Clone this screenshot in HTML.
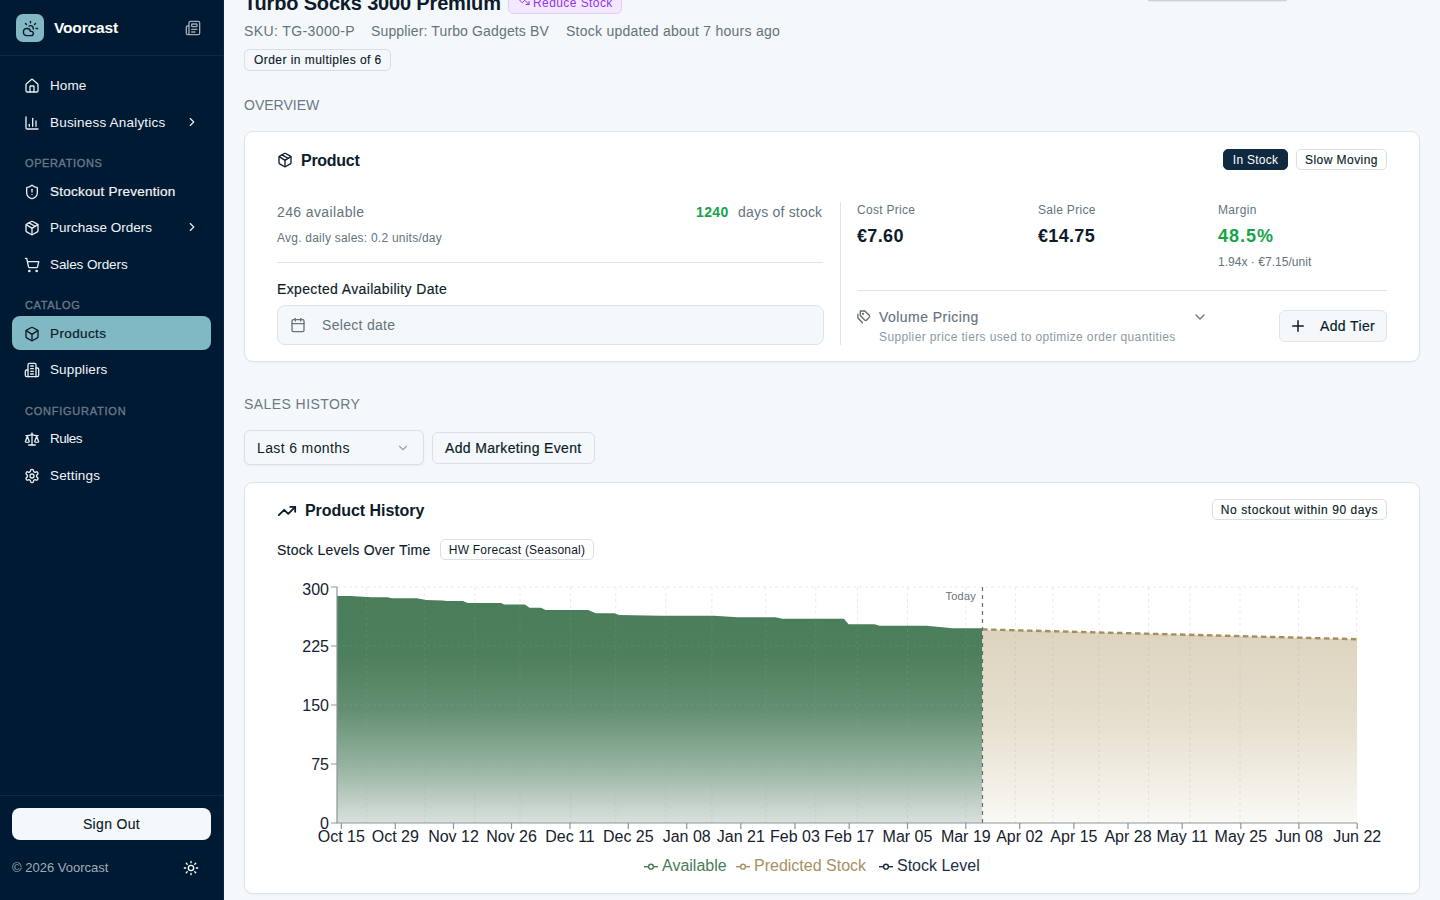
<!DOCTYPE html>
<html><head><meta charset="utf-8">
<style>
*{box-sizing:border-box;margin:0;padding:0}
html,body{width:1440px;height:900px;overflow:hidden}
body{background:#f4f8fb;font-family:"Liberation Sans",sans-serif;color:#0d1b2a;position:relative}
.abs{position:absolute}
.t{position:absolute;white-space:nowrap;line-height:1}
svg{display:block}
/* sidebar */
#sb{position:absolute;left:0;top:0;width:224px;height:900px;background:#011a33;border-right:1px solid #0a2840}
#sb .logo{left:16px;top:14px;width:28px;height:28px;background:#82b8c4;border-radius:7px}
#sb .hr{left:0;width:223px;height:1px;background:#0c2a42}
.nav{position:absolute;left:12px;width:199px;height:34px;border-radius:8px;color:#f1f5f9;font-size:13.5px}
.nav .ic{position:absolute;left:12px;top:10px}
.nav .lb{position:absolute;left:38px;top:11px;line-height:14px;white-space:nowrap;letter-spacing:.25px}
.nav .chev{position:absolute;left:173px;top:10px}
.nav.act{background:#80b8c3;color:#0d1b2a}
.sec{position:absolute;left:25px;font-size:11px;font-weight:normal;-webkit-text-stroke-width:.35px;letter-spacing:.9px;color:#6a7886;line-height:11px}
/* main */
.card{position:absolute;background:#fff;border:1px solid #dde4ea;border-radius:9px;box-shadow:0 1px 2px rgba(0,0,0,.04)}
.badge{position:absolute;height:21px;border-radius:5px;font-size:12px;line-height:19px;padding:0 9px;white-space:nowrap;border:1px solid #d8dfe5;background:#fff;color:#0d1b2a}
.grey{color:#65737e}
</style></head>
<body>
<div id="sb">
  <div class="abs logo">
    <svg style="position:absolute;left:5.8px;top:6px" width="17" height="17" viewBox="0 0 24 24" fill="none" stroke="#0d1b2a" stroke-width="2" stroke-linecap="round" stroke-linejoin="round"><path d="M12 2v2"/><path d="m4.93 4.93 1.41 1.41"/><path d="M20 12h2"/><path d="m19.07 4.93-1.41 1.41"/><path d="M15.947 12.65a4 4 0 0 0-5.925-4.128"/><path d="M13 22H7a5 5 0 1 1 4.9-6H13a3 3 0 0 1 0 6Z"/></svg>
  </div>
  <div class="t" style="left:54px;top:20px;font-weight:bold;color:#fff;font-size:15.5px;letter-spacing:-0.15px">Voorcast</div>
  <svg class="abs" style="left:185.3px;top:19.8px" width="16" height="16" viewBox="0 0 24 24" fill="none" stroke="#a3abb3" stroke-width="2" stroke-linecap="round" stroke-linejoin="round"><path d="M15 18h-5"/><path d="M18 14h-8"/><path d="M4 22h16a2 2 0 0 0 2-2V4a2 2 0 0 0-2-2H8a2 2 0 0 0-2 2v16a2 2 0 0 1-4 0v-9a2 2 0 0 1 2-2h2"/><rect width="8" height="4" x="10" y="6" rx="1"/></svg>
  <div class="abs hr" style="top:55px"></div>

  <div class="nav" style="top:68px">
    <svg class="ic" width="16" height="16" viewBox="0 0 24 24" fill="none" stroke="#e8edf2" stroke-width="2" stroke-linecap="round" stroke-linejoin="round"><path d="M15 21v-8a1 1 0 0 0-1-1h-4a1 1 0 0 0-1 1v8"/><path d="M3 10a2 2 0 0 1 .709-1.528l7-5.999a2 2 0 0 1 2.582 0l7 5.999A2 2 0 0 1 21 10v9a2 2 0 0 1-2 2H5a2 2 0 0 1-2-2z"/></svg>
    <div class="lb" style="letter-spacing:0.1px">Home</div>
  </div>
  <div class="nav" style="top:105px">
    <svg class="ic" width="16" height="16" viewBox="0 0 24 24" fill="none" stroke="#e8edf2" stroke-width="2" stroke-linecap="round" stroke-linejoin="round"><path d="M3 3v16a2 2 0 0 0 2 2h16"/><path d="M18 17V9"/><path d="M13 17V5"/><path d="M8 17v-3"/></svg>
    <div class="lb" style="letter-spacing:0.2px">Business Analytics</div>
    <svg class="chev" width="14" height="14" viewBox="0 0 24 24" fill="none" stroke="#e8edf2" stroke-width="2" stroke-linecap="round" stroke-linejoin="round"><path d="m9 18 6-6-6-6"/></svg>
  </div>
  <div class="sec" style="top:158px;letter-spacing:0.61px">OPERATIONS</div>
  <div class="nav" style="top:174px">
    <svg class="ic" width="16" height="16" viewBox="0 0 24 24" fill="none" stroke="#e8edf2" stroke-width="2" stroke-linecap="round" stroke-linejoin="round"><path d="M20 13c0 5-3.5 7.5-7.66 8.95a1 1 0 0 1-.67-.01C7.5 20.5 4 18 4 13V6a1 1 0 0 1 1-1c2 0 4.5-1.2 6.24-2.72a1.17 1.17 0 0 1 1.52 0C14.51 3.81 17 5 19 5a1 1 0 0 1 1 1z"/><path d="M12 8v4"/><path d="M12 16h.01"/></svg>
    <div class="lb" style="-webkit-text-stroke-width:0.2px">Stockout Prevention</div>
  </div>
  <div class="nav" style="top:210px">
    <svg class="ic" width="16" height="16" viewBox="0 0 24 24" fill="none" stroke="#e8edf2" stroke-width="2" stroke-linecap="round" stroke-linejoin="round"><path d="M11 21.73a2 2 0 0 0 2 0l7-4A2 2 0 0 0 21 16V8a2 2 0 0 0-1-1.73l-7-4a2 2 0 0 0-2 0l-7 4A2 2 0 0 0 3 8v8a2 2 0 0 0 1 1.73z"/><path d="M12 22V12"/><path d="m3.3 7 7.703 4.734a2 2 0 0 0 1.994 0L20.7 7"/><path d="m7.5 4.27 9 5.15"/></svg>
    <div class="lb" style="letter-spacing:0px">Purchase Orders</div>
    <svg class="chev" width="14" height="14" viewBox="0 0 24 24" fill="none" stroke="#e8edf2" stroke-width="2" stroke-linecap="round" stroke-linejoin="round"><path d="m9 18 6-6-6-6"/></svg>
  </div>
  <div class="nav" style="top:247px">
    <svg class="ic" width="16" height="16" viewBox="0 0 24 24" fill="none" stroke="#e8edf2" stroke-width="2" stroke-linecap="round" stroke-linejoin="round"><circle cx="8" cy="21" r="1"/><circle cx="19" cy="21" r="1"/><path d="M2.05 2.05h2l2.66 12.42a2 2 0 0 0 2 1.58h9.78a2 2 0 0 0 1.95-1.57l1.65-7.43H5.12"/></svg>
    <div class="lb" style="letter-spacing:-0.1px">Sales Orders</div>
  </div>
  <div class="sec" style="top:300px;letter-spacing:0.64px">CATALOG</div>
  <div class="nav act" style="top:316px">
    <svg class="ic" width="16" height="16" viewBox="0 0 24 24" fill="none" stroke="#0d1b2a" stroke-width="2" stroke-linecap="round" stroke-linejoin="round"><path d="M11 21.73a2 2 0 0 0 2 0l7-4A2 2 0 0 0 21 16V8a2 2 0 0 0-1-1.73l-7-4a2 2 0 0 0-2 0l-7 4A2 2 0 0 0 3 8v8a2 2 0 0 0 1 1.73z"/><path d="M12 22V12"/><path d="m3.3 7 7.703 4.734a2 2 0 0 0 1.994 0L20.7 7"/></svg>
    <div class="lb" style="letter-spacing:0.38px;-webkit-text-stroke-width:0.2px">Products</div>
  </div>
  <div class="nav" style="top:352px">
    <svg class="ic" width="16" height="16" viewBox="0 0 24 24" fill="none" stroke="#e8edf2" stroke-width="2" stroke-linecap="round" stroke-linejoin="round"><path d="M6 22V4a2 2 0 0 1 2-2h8a2 2 0 0 1 2 2v18Z"/><path d="M6 12H4a2 2 0 0 0-2 2v6a2 2 0 0 0 2 2h2"/><path d="M18 9h2a2 2 0 0 1 2 2v9a2 2 0 0 1-2 2h-2"/><path d="M10 6h4"/><path d="M10 10h4"/><path d="M10 14h4"/><path d="M10 18h4"/></svg>
    <div class="lb" style="letter-spacing:0.12px">Suppliers</div>
  </div>
  <div class="sec" style="top:406px;letter-spacing:0.76px">CONFIGURATION</div>
  <div class="nav" style="top:421px">
    <svg class="ic" width="16" height="16" viewBox="0 0 24 24" fill="none" stroke="#e8edf2" stroke-width="2" stroke-linecap="round" stroke-linejoin="round"><path d="m16 16 3-8 3 8c-.87.65-1.92 1-3 1s-2.13-.35-3-1Z"/><path d="m2 16 3-8 3 8c-.87.65-1.92 1-3 1s-2.13-.35-3-1Z"/><path d="M7 21h10"/><path d="M12 3v18"/><path d="M3 7h2c2 0 5-1 7-2 2 1 5 2 7 2h2"/></svg>
    <div class="lb" style="letter-spacing:-0.5px">Rules</div>
  </div>
  <div class="nav" style="top:458px">
    <svg class="ic" width="16" height="16" viewBox="0 0 24 24" fill="none" stroke="#e8edf2" stroke-width="2" stroke-linecap="round" stroke-linejoin="round"><path d="M12.22 2h-.44a2 2 0 0 0-2 2v.18a2 2 0 0 1-1 1.73l-.43.25a2 2 0 0 1-2 0l-.15-.08a2 2 0 0 0-2.73.73l-.22.38a2 2 0 0 0 .73 2.73l.15.1a2 2 0 0 1 1 1.72v.51a2 2 0 0 1-1 1.74l-.15.09a2 2 0 0 0-.73 2.73l.22.38a2 2 0 0 0 2.73.73l.15-.08a2 2 0 0 1 2 0l.43.25a2 2 0 0 1 1 1.73V20a2 2 0 0 0 2 2h.44a2 2 0 0 0 2-2v-.18a2 2 0 0 1 1-1.73l.43-.25a2 2 0 0 1 2 0l.15.08a2 2 0 0 0 2.73-.73l.22-.39a2 2 0 0 0-.73-2.73l-.15-.08a2 2 0 0 1-1-1.74v-.5a2 2 0 0 1 1-1.74l.15-.09a2 2 0 0 0 .73-2.73l-.22-.38a2 2 0 0 0-2.73-.73l-.15.08a2 2 0 0 1-2 0l-.43-.25a2 2 0 0 1-1-1.73V4a2 2 0 0 0-2-2z"/><circle cx="12" cy="12" r="3"/></svg>
    <div class="lb" style="letter-spacing:0.16px">Settings</div>
  </div>

  <div class="abs hr" style="top:795px"></div>
  <div class="abs" style="left:12px;top:808px;width:199px;height:32px;background:#f4f8fb;border-radius:8px;font-size:14px;text-align:center;line-height:32px;color:#0d1b2a;letter-spacing:0.33px;-webkit-text-stroke-width:0.15px">Sign Out</div>
  <div class="t" style="left:12px;top:861px;color:#a1abb4;font-size:13px;letter-spacing:0px">© 2026 Voorcast</div>
  <svg class="abs" style="left:183px;top:860px" width="16" height="16" viewBox="0 0 24 24" fill="none" stroke="#fff" stroke-width="2" stroke-linecap="round"><circle cx="12" cy="12" r="4"/><path d="M12 2v2M12 20v2M4.93 4.93l1.41 1.41M17.66 17.66l1.41 1.41M2 12h2M20 12h2M6.34 17.66l-1.41 1.41M19.07 4.93l-1.41 1.41"/></svg>
</div>

<div id="main">
<!-- header -->
<div class="t" style="left:244px;top:-7px;font-size:20px;font-weight:bold;line-height:20px;color:#0d1b2a;letter-spacing:-0.17px">Turbo Socks 3000 Premium</div>
<div class="abs" style="left:508px;top:-8px;width:114px;height:22px;border:1px solid #e4cdfb;background:#f3e8ff;border-radius:5px"></div>
<svg class="abs" style="left:518px;top:-4px" width="12" height="12" viewBox="0 0 24 24" fill="none" stroke="#9333ea" stroke-width="2" stroke-linecap="round" stroke-linejoin="round"><path d="M16 17h6v-6"/><path d="m22 17-8.5-8.5-5 5L2 7"/></svg>
<div class="t" style="left:533px;top:-4px;font-size:12px;line-height:14px;color:#9333ea;letter-spacing:0.42px">Reduce Stock</div>
<div class="abs" style="left:1148px;top:0;width:139px;height:1px;background:#ccd4da"></div><div class="abs" style="left:1149px;top:1px;width:137px;height:1px;background:#e6ebef"></div>

<div class="t grey" style="left:244px;top:24px;font-size:14px;line-height:14px;letter-spacing:0.39px">SKU: TG-3000-P</div>
<div class="t grey" style="left:371px;top:24px;font-size:14px;line-height:14px;letter-spacing:0.14px">Supplier: Turbo Gadgets BV</div>
<div class="t grey" style="left:566px;top:24px;font-size:14px;line-height:14px;letter-spacing:0.25px">Stock updated about 7 hours ago</div>
<div class="badge" style="left:244px;top:49px;width:147px;background:#f5f8fb;padding:0 0 0 9px;line-height:20px;height:22px;letter-spacing:0.45px;-webkit-text-stroke-width:0.15px">Order in multiples of 6</div>

<div class="t" style="left:244px;top:98px;font-size:14px;line-height:14px;color:#6b7a84;letter-spacing:0px">OVERVIEW</div>

<!-- card 1 -->
<div class="card" style="left:244px;top:131px;width:1176px;height:231px"></div>
<svg class="abs" style="left:277px;top:152px" width="16" height="16" viewBox="0 0 24 24" fill="none" stroke="#0d1b2a" stroke-width="2" stroke-linecap="round" stroke-linejoin="round"><path d="M11 21.73a2 2 0 0 0 2 0l7-4A2 2 0 0 0 21 16V8a2 2 0 0 0-1-1.73l-7-4a2 2 0 0 0-2 0l-7 4A2 2 0 0 0 3 8v8a2 2 0 0 0 1 1.73z"/><path d="M12 22V12"/><path d="m3.3 7 7.703 4.734a2 2 0 0 0 1.994 0L20.7 7"/><path d="m7.5 4.27 9 5.15"/></svg>
<div class="t" style="left:301px;top:153px;font-size:16px;line-height:16px;font-weight:bold;letter-spacing:-0.28px">Product</div>
<div class="badge" style="left:1223px;top:149px;width:65px;line-height:21px;background:#0f2a40;border-color:#0f2a40;color:#fff;padding:0;text-align:center;letter-spacing:0.26px">In Stock</div>
<div class="badge" style="left:1296px;top:149px;width:91px;line-height:21px;padding:0;text-align:center;letter-spacing:0.45px;-webkit-text-stroke-width:0.15px">Slow Moving</div>

<div class="t grey" style="left:277px;top:205px;font-size:14px;line-height:14px;letter-spacing:0.38px">246 available</div>
<div class="t" style="left:696px;top:205px;font-size:14px;line-height:14px;font-weight:bold;color:#16a34a;letter-spacing:0.4px">1240</div>
<div class="t grey" style="left:738px;top:205px;font-size:14px;line-height:14px;letter-spacing:0.2px">days of stock</div>
<div class="t grey" style="left:277px;top:232px;font-size:12px;line-height:12px;letter-spacing:0.23px">Avg. daily sales: 0.2 units/day</div>
<div class="abs" style="left:277px;top:262px;width:546px;height:1px;background:#dde4ea"></div>
<div class="t" style="left:277px;top:282px;font-size:14px;line-height:14px;letter-spacing:0.36px;-webkit-text-stroke-width:0.15px">Expected Availability Date</div>
<div class="abs" style="left:277px;top:305px;width:547px;height:40px;background:#f4f8fb;border:1px solid #dde4ea;border-radius:8px"></div>
<svg class="abs" style="left:290px;top:317px" width="16" height="16" viewBox="0 0 24 24" fill="none" stroke="#65737e" stroke-width="2" stroke-linecap="round" stroke-linejoin="round"><path d="M8 2v4"/><path d="M16 2v4"/><rect width="18" height="18" x="3" y="4" rx="2"/><path d="M3 10h18"/></svg>
<div class="t grey" style="left:322px;top:318px;font-size:14px;line-height:14px;letter-spacing:0.3px">Select date</div>

<div class="abs" style="left:840px;top:202px;width:1px;height:143px;background:#dde4ea"></div>
<div class="t grey" style="left:857px;top:204px;font-size:12px;line-height:12px;letter-spacing:0.3px">Cost Price</div>
<div class="t" style="left:857px;top:227px;font-size:18px;line-height:18px;font-weight:bold;letter-spacing:0.35px">€7.60</div>
<div class="t grey" style="left:1038px;top:204px;font-size:12px;line-height:12px;letter-spacing:0.3px">Sale Price</div>
<div class="t" style="left:1038px;top:227px;font-size:18px;line-height:18px;font-weight:bold;letter-spacing:0.32px">€14.75</div>
<div class="t grey" style="left:1218px;top:204px;font-size:12px;line-height:12px;letter-spacing:0.34px">Margin</div>
<div class="t" style="left:1218px;top:227px;font-size:18px;line-height:18px;font-weight:bold;color:#16a34a;letter-spacing:0.97px">48.5%</div>
<div class="t grey" style="left:1218px;top:256px;font-size:12px;line-height:12px;letter-spacing:0.03px">1.94x · €7.15/unit</div>
<div class="abs" style="left:857px;top:290px;width:530px;height:1px;background:#dde4ea"></div>
<svg class="abs" style="left:852px;top:306px" width="22" height="22" viewBox="0 0 22 22" fill="none" stroke="#5f6d78" stroke-width="1.35" stroke-linecap="round" stroke-linejoin="round"><path d="M8.3 5H12.9L17.2 9.3a1.5 1.5 0 0 1 0 2.1L14.7 13.9a1.5 1.5 0 0 1-2.1 0L8.3 9.6Z"/><circle cx="11" cy="7.8" r=".45" fill="#5f6d78"/><path d="M5.9 8.1V12.1L10.5 16.7"/></svg>
<div class="t grey" style="left:879px;top:310px;font-size:14px;line-height:14px;letter-spacing:0.46px;-webkit-text-stroke-width:0.15px">Volume Pricing</div>
<div class="t" style="left:879px;top:331px;font-size:12px;line-height:12px;color:#8d99a3;letter-spacing:0.38px">Supplier price tiers used to optimize order quantities</div>
<svg class="abs" style="left:1192px;top:309px" width="16" height="16" viewBox="0 0 24 24" fill="none" stroke="#65737e" stroke-width="2" stroke-linecap="round" stroke-linejoin="round"><path d="m6 9 6 6 6-6"/></svg>
<div class="abs" style="left:1279px;top:310px;width:108px;height:32px;background:#f4f8fb;border:1px solid #dde4ea;border-radius:6px"></div>
<svg class="abs" style="left:1289px;top:317px" width="18" height="18" viewBox="0 0 24 24" fill="none" stroke="#0d1b2a" stroke-width="2" stroke-linecap="round" stroke-linejoin="round"><path d="M5 12h14"/><path d="M12 5v14"/></svg>
<div class="t" style="left:1320px;top:319px;font-size:14px;line-height:14px;letter-spacing:0.37px;-webkit-text-stroke-width:0.2px">Add Tier</div>

<div class="t" style="left:244px;top:397px;font-size:14px;line-height:14px;color:#6b7a84;letter-spacing:0.43px">SALES HISTORY</div>
<div class="abs" style="left:244px;top:430px;width:180px;height:35px;background:#f5f8fb;border:1px solid #d9e0e6;border-radius:6px;box-shadow:0 1px 2px rgba(0,0,0,.05)"></div>
<div class="t" style="left:257px;top:441px;font-size:14px;line-height:14px;letter-spacing:0.37px">Last 6 months</div>
<svg class="abs" style="left:396px;top:441px" width="14" height="14" viewBox="0 0 24 24" fill="none" stroke="#98a3ac" stroke-width="2" stroke-linecap="round" stroke-linejoin="round"><path d="m6 9 6 6 6-6"/></svg>
<div class="abs" style="left:432px;top:432px;width:163px;height:32px;background:#f5f8fb;border:1px solid #d9e0e6;border-radius:6px"></div>
<div class="t" style="left:445px;top:441px;font-size:14px;line-height:14px;letter-spacing:0.35px;-webkit-text-stroke-width:0.2px">Add Marketing Event</div>

<!-- card 2 -->
<div class="card" style="left:244px;top:482px;width:1176px;height:412px"></div>
<svg class="abs" style="left:277px;top:502px" width="20" height="18" viewBox="0 0 24 22" fill="none" stroke="#0d1b2a" stroke-width="2.2" stroke-linecap="round" stroke-linejoin="round"><path d="M16 6h6v6"/><path d="m22 6-8.5 8.5-5-5L2 16"/></svg>
<div class="t" style="left:305px;top:503px;font-weight:bold;font-size:16px;line-height:16px;letter-spacing:-0.05px">Product History</div>
<div class="badge" style="left:1212px;top:499px;width:175px;line-height:21px;padding:0;text-align:center;letter-spacing:0.56px;-webkit-text-stroke-width:0.15px">No stockout within 90 days</div>
<div class="t" style="left:277px;top:543px;font-size:14px;line-height:14px;letter-spacing:0.26px;-webkit-text-stroke-width:0.15px">Stock Levels Over Time</div>
<div class="badge" style="left:440px;top:539px;width:154px;line-height:21px;padding:0;text-align:center;letter-spacing:0.23px">HW Forecast (Seasonal)</div>

<svg class="abs" style="left:0;top:0" width="1440" height="900" viewBox="0 0 1440 900">
  <defs>
    <linearGradient id="gG" x1="0" y1="0" x2="0" y2="1">
      <stop offset="0" stop-color="rgb(74,125,89)"/>
      <stop offset="0.25" stop-color="rgb(76,127,91)"/>
      <stop offset="0.5" stop-color="rgb(99,143,113)"/>
      <stop offset="0.75" stop-color="rgb(150,179,160)"/>
      <stop offset="1" stop-color="rgb(218,225,221)"/>
    </linearGradient>
    <linearGradient id="gP" x1="0" y1="0" x2="0" y2="1">
      <stop offset="0" stop-color="rgb(221,212,190)"/>
      <stop offset="0.5" stop-color="rgb(231,224,208)"/>
      <stop offset="1" stop-color="rgb(250,249,245)"/>
    </linearGradient>
  <clipPath id="areaClip"><path d="M337 596 L350.6 596 L371.3 597.2 L387.3 597.3 L392 598.3 L417 598.3 L426 600 L442.4 600.6 L447 601 L463 601 L467.6 603 L501 603 L504.3 604.5 L525 604.5 L529.5 607.75 L541 607.75 L545.6 610 L588 610 L596 613.3 L614.4 613.3 L619 614.9 L660 615.8 L714 615.8 L737.6 617.2 L775.4 617.2 L782.5 618.8 L843.9 618.8 L848.6 624.3 L874.6 624.3 L879.3 625.7 L926.5 625.7 L952.5 628.3 L982 628.3 L982 823 L337 823 Z M982 629.4 L1357 639.2 L1357 823 L982 823 Z"/></clipPath></defs>
  <g stroke="#e8ebee" stroke-width="1" stroke-dasharray="3 3" fill="none">
    <path d="M337 587H1357M337 646H1357M337 705H1357M337 764H1357"/>
    <path d="M366.5 587V823M424.8 587V823M474.8 587V823M520 587V823M570.6 587V823M615.8 587V823M665.8 587V823M711.9 587V823M765.8 587V823M815.8 587V823M857.5 587V823M907.5 587V823M965.8 587V823M1015.3 587V823M1052.8 587V823M1099 587V823M1148.6 587V823M1190 587V823M1240 587V823M1298.6 587V823M1356.7 587V823"/>
  </g>
  <path fill="url(#gG)" d="M337 596 L350.6 596 L371.3 597.2 L387.3 597.3 L392 598.3 L417 598.3 L426 600 L442.4 600.6 L447 601 L463 601 L467.6 603 L501 603 L504.3 604.5 L525 604.5 L529.5 607.75 L541 607.75 L545.6 610 L588 610 L596 613.3 L614.4 613.3 L619 614.9 L660 615.8 L714 615.8 L737.6 617.2 L775.4 617.2 L782.5 618.8 L843.9 618.8 L848.6 624.3 L874.6 624.3 L879.3 625.7 L926.5 625.7 L952.5 628.3 L982 628.3 L982 823 L337 823 Z"/>
  <path fill="url(#gP)" d="M982 629.4 L1357 639.2 L1357 823 L982 823 Z"/>
  <g stroke="#9aa6ae" stroke-width="1" stroke-dasharray="3 3" fill="none" opacity=".22" clip-path="url(#areaClip)">
    <path d="M366.5 587V823M424.8 587V823M474.8 587V823M520 587V823M570.6 587V823M615.8 587V823M665.8 587V823M711.9 587V823M765.8 587V823M815.8 587V823M857.5 587V823M907.5 587V823M965.8 587V823M1015.3 587V823M1052.8 587V823M1099 587V823M1148.6 587V823M1190 587V823M1240 587V823M1298.6 587V823"/>
  </g>
  <g stroke="#c9d0d5" stroke-width="1" stroke-dasharray="3 3" fill="none" opacity=".12" clip-path="url(#areaClip)">
    <path d="M337 646H1357M337 705H1357M337 764H1357"/>
  </g>
  <path d="M982 629.4 L1357 639.2" stroke="#a88e5c" stroke-width="2.4" stroke-dasharray="5.5 3.5" fill="none"/>
  <path d="M982.5 587V823" stroke="#5f6f7b" stroke-width="1.2" stroke-dasharray="4 4" fill="none"/>
  <text x="976" y="600" text-anchor="end" font-family="Liberation Sans" font-size="11" fill="#65737e" letter-spacing=".25">Today</text>
  <g stroke="#8d959c" stroke-width="1.2" fill="none">
    <path d="M337 587V823H1357"/>
    <path d="M331 587H337M331 646H337M331 705H337M331 764H337M331 823H337"/>
    <path d="M341.3 823v6M395.3 823v6M453.5 823v6M511.5 823v6M570 823v6M628.3 823v6M686.7 823v6M740.8 823v6M795 823v6M849.2 823v6M907.5 823v6M965.8 823v6M1019.7 823v6M1073.9 823v6M1128 823v6M1182.2 823v6M1240.8 823v6M1298.9 823v6M1357.2 823v6"/>
  </g>
  <g font-family="Liberation Sans" font-size="16" fill="#15222e" text-anchor="end">
    <text x="329" y="595">300</text>
    <text x="329" y="652">225</text>
    <text x="329" y="711">150</text>
    <text x="329" y="770">75</text>
    <text x="329" y="829">0</text>
  </g>
  <g font-family="Liberation Sans" font-size="16" fill="#15222e" text-anchor="middle">
    <text x="341.3" y="842">Oct 15</text>
    <text x="395.3" y="842">Oct 29</text>
    <text x="453.5" y="842">Nov 12</text>
    <text x="511.5" y="842">Nov 26</text>
    <text x="570" y="842">Dec 11</text>
    <text x="628.3" y="842">Dec 25</text>
    <text x="686.7" y="842">Jan 08</text>
    <text x="740.8" y="842">Jan 21</text>
    <text x="795" y="842">Feb 03</text>
    <text x="849.2" y="842">Feb 17</text>
    <text x="907.5" y="842">Mar 05</text>
    <text x="965.8" y="842">Mar 19</text>
    <text x="1019.7" y="842">Apr 02</text>
    <text x="1073.9" y="842">Apr 15</text>
    <text x="1128" y="842">Apr 28</text>
    <text x="1182.2" y="842">May 11</text>
    <text x="1240.8" y="842">May 25</text>
    <text x="1298.9" y="842">Jun 08</text>
    <text x="1357.2" y="842">Jun 22</text>
  </g>
  <g font-family="Liberation Sans" font-size="16" stroke-width="1.5" fill="none">
    <path d="M644 866.7H658" stroke="#4a7c59" stroke-width="1.4"/><circle cx="651" cy="866.7" r="2.4" fill="#fff" stroke="#4a7c59" stroke-width="1.4"/>
    <text x="662" y="871" fill="#4a7c59" stroke="none">Available</text>
    <path d="M736 866.7H750" stroke="#a89060" stroke-width="1.4"/><circle cx="743" cy="866.7" r="2.4" fill="#fff" stroke="#a89060" stroke-width="1.4"/>
    <text x="754" y="871" fill="#a89060" stroke="none">Predicted Stock</text>
    <path d="M879 866.7H893" stroke="#1a3047" stroke-width="1.4"/><circle cx="886" cy="866.7" r="2.4" fill="#fff" stroke="#1a3047" stroke-width="1.4"/>
    <text x="897" y="871" fill="#1a3047" stroke="none">Stock Level</text>
  </g>
</svg>

</div>
</body></html>
